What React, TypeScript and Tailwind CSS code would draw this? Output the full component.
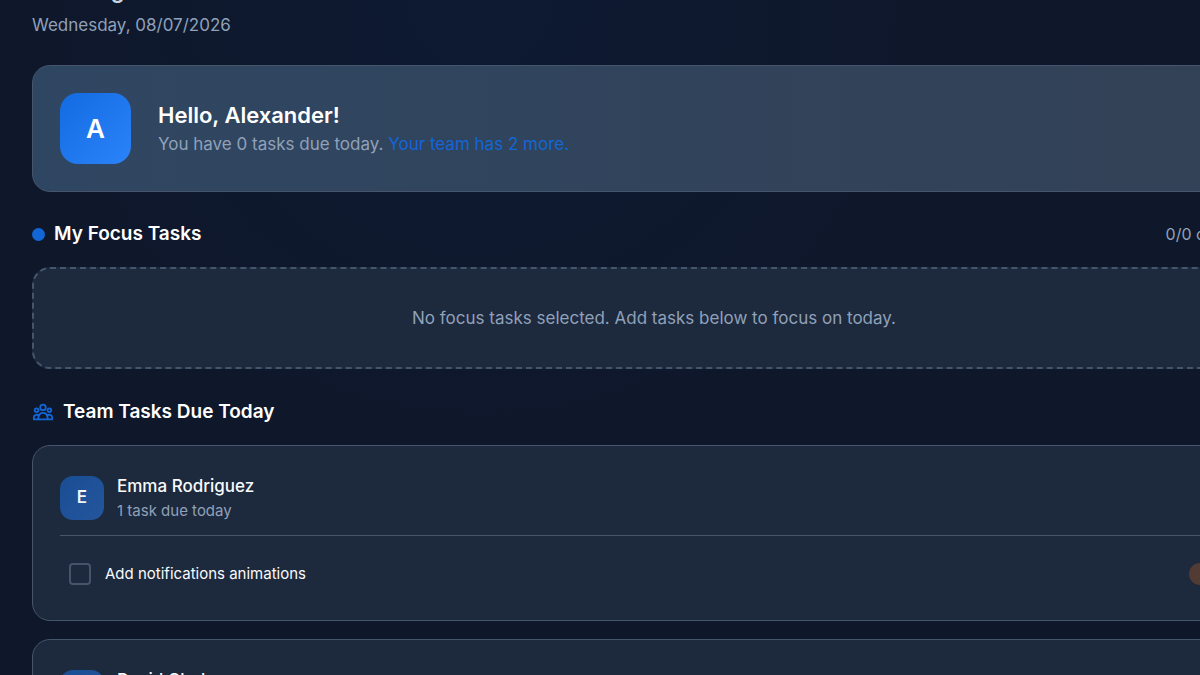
import type { ReactNode } from 'react';
import { clsx } from 'clsx';

type Task = { id: string; title: string; priority: string };
type Member = { id: string; name: string; tasks: Task[] };

const MEMBERS: Member[] = [
  {
    id: 'emma',
    name: 'Emma Rodriguez',
    tasks: [{ id: 'emma-1', title: 'Add notifications animations', priority: 'High' }],
  },
  {
    id: 'david',
    name: 'David Clark',
    tasks: [{ id: 'david-1', title: 'Review open tasks', priority: 'High' }],
  },
];

function UserGroupIcon() {
  return (
    <svg
      viewBox="0 0 24 24"
      fill="none"
      stroke="currentColor"
      strokeWidth={2}
      strokeLinecap="round"
      strokeLinejoin="round"
      className="size-[22px] shrink-0 text-[#1366d6]"
      aria-hidden
    >
      <path d="M17 20h5v-2a3 3 0 00-5.356-1.857M17 20H7m10 0v-2c0-.656-.126-1.283-.356-1.857M7 20H2v-2a3 3 0 015.356-1.857M7 20v-2c0-.656.126-1.283.356-1.857m0 0a5.002 5.002 0 019.288 0M15 7a3 3 0 11-6 0 3 3 0 016 0zm6 3a2 2 0 11-4 0 2 2 0 014 0zM7 10a2 2 0 11-4 0 2 2 0 014 0z" />
    </svg>
  );
}

function Avatar({ name, large }: { name: string; large?: boolean }) {
  return (
    <span
      className={clsx(
        'grid shrink-0 place-items-center bg-linear-to-br font-semibold',
        large
          ? 'size-[71px] rounded-[18px] from-[#126be2] to-[#2b83fa] text-[26px] text-white'
          : 'size-11 rounded-[13px] from-[#194e93] to-[#24559d] text-[17px] text-slate-100',
      )}
    >
      {name[0]}
    </span>
  );
}

function SectionTitle({ icon, children }: { icon: ReactNode; children: ReactNode }) {
  return (
    <h2 className="flex items-center gap-[9px] text-[19px] leading-[30px] font-semibold text-white">
      {icon}
      {children}
    </h2>
  );
}

function MemberCard({ member }: { member: Member }) {
  return (
    <article className="rounded-[18px] border border-slate-600 bg-slate-800 px-[27px] pt-[27px] pb-[26px]">
      <header className="flex items-center gap-[13px] border-b border-slate-600 pb-3">
        <Avatar name={member.name} />
        <div>
          <h3 className="text-[17px] leading-[26px] font-medium text-slate-50">{member.name}</h3>
          <p className="text-[15px] leading-6 text-slate-400">
            {member.tasks.length} task due today
          </p>
        </div>
      </header>
      <ul className="pt-[18px]">
        {member.tasks.map((task) => (
          <li key={task.id} className="flex items-center justify-between p-[9px]">
            <label className="flex items-center gap-[14px] text-[15px] leading-[22px] text-slate-50">
              <input
                type="checkbox"
                className="size-[22px] appearance-none rounded-[4px] border-2 border-slate-600"
              />
              {task.title}
            </label>
            <span className="rounded-full bg-[#523b33] px-[11px] text-[13px] leading-[22px] text-orange-400">
              {task.priority}
            </span>
          </li>
        ))}
      </ul>
    </article>
  );
}

export default function App() {
  return (
    <div className="h-screen overflow-hidden bg-[#0f172a] bg-[radial-gradient(circle_at_40%_0%,#0d1a32_0%,#0f172a_50%)] font-['Inter','Liberation_Sans',sans-serif]">
      <main className="w-[109%] px-8">
        <header className="-mt-8">
          <h1 className="text-[22px] leading-[44px] font-semibold text-slate-300">Planning</h1>
          <p className="text-[17px] leading-[26px] text-slate-400">Wednesday, 08/07/2026</p>
        </header>

        <section className="mt-[27px] flex items-center gap-[27px] rounded-[18px] border border-slate-600 bg-linear-to-r from-[#2f4662] to-[#334155] p-[27px]">
          <Avatar name="Alexander" large />
          <div>
            <h2 className="text-[22px] leading-[31px] font-semibold text-white">Hello, Alexander!</h2>
            <p className="text-[17px] leading-[26px] text-slate-400">
              You have 0 tasks due today.{' '}
              <span className="text-[#1366d6]">Your team has 2 more.</span>
            </p>
          </div>
        </section>

        <section className="mt-[27px]">
          <div className="flex items-center justify-between">
            <SectionTitle icon={<span className="size-[13px] rounded-full bg-[#1366d6]" />}>
              My Focus Tasks
            </SectionTitle>
            <span className="text-base text-slate-400">0/0 completed</span>
          </div>
          <div className="mt-[18px] rounded-[18px] border-2 border-dashed border-slate-600 bg-slate-800 p-9 text-center text-[17px] leading-[26px] text-slate-400">
            No focus tasks selected. Add tasks below to focus on today.
          </div>
        </section>

        <section className="mt-7">
          <SectionTitle icon={<UserGroupIcon />}>Team Tasks Due Today</SectionTitle>
          <div className="mt-[18px] flex flex-col gap-[18px]">
            {MEMBERS.map((member) => (
              <MemberCard key={member.id} member={member} />
            ))}
          </div>
        </section>
      </main>
    </div>
  );
}
